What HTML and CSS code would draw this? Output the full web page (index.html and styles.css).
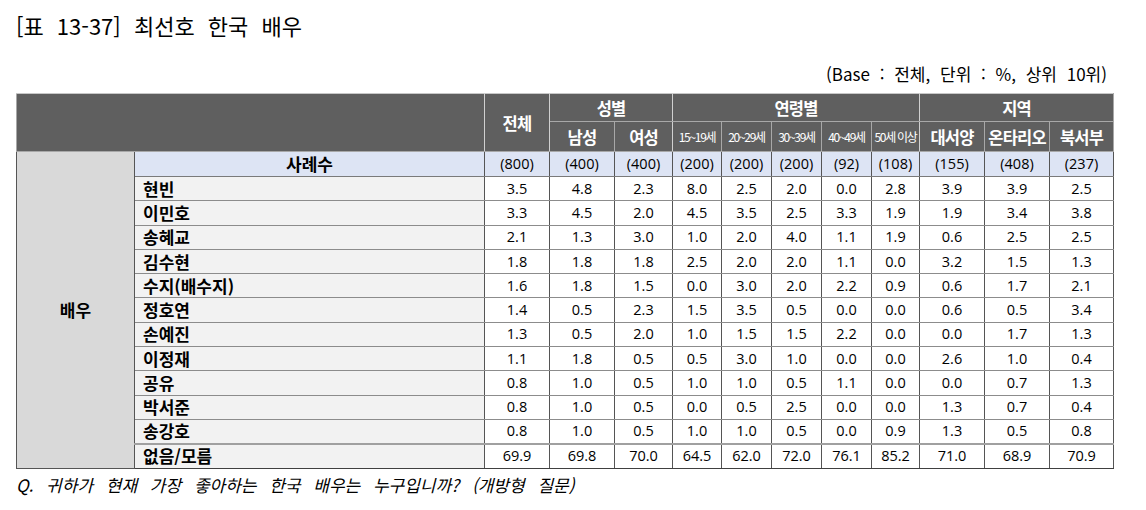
FILE: index.html
```html
<!DOCTYPE html>
<html lang="ko">
<head>
<meta charset="utf-8">
<link rel="stylesheet" href="styles.css">
</head>
<body>
<div class="page">
  <h1 class="title">[표 13-37] 최선호 한국 배우</h1>
  <div class="base">(Base : 전체, 단위 : %, 상위 10위)</div>
  <table class="tbl">
    <colgroup>
      <col class="c-lab"><col class="c-name"><col class="c65"><col class="c65"><col class="c58">
      <col class="c49"><col class="c50"><col class="c50"><col class="c50"><col class="c48">
      <col class="c65"><col class="c65"><col class="c64">
    </colgroup>
    <thead>
      <tr class="h1">
        <th colspan="2" rowspan="2" class="hblank"></th>
        <th rowspan="2" class="gb">전체</th>
        <th colspan="2" class="gb">성별</th>
        <th colspan="5" class="gb">연령별</th>
        <th colspan="3">지역</th>
      </tr>
      <tr class="h2">
        <th>남성</th><th class="gb">여성</th>
        <th class="age">15~19세</th><th class="age">20~29세</th><th class="age">30~39세</th><th class="age">40~49세</th><th class="age gb">50세 이상</th>
        <th>대서양</th><th>온타리오</th><th>북서부</th>
      </tr>
    </thead>
    <tbody>
      <tr class="sample">
        <td rowspan="13" class="lab">배우</td>
        <td class="sname">사례수</td>
        <td>(800)</td><td>(400)</td><td>(400)</td><td>(200)</td><td>(200)</td><td>(200)</td><td>(92)</td><td>(108)</td><td>(155)</td><td>(408)</td><td>(237)</td>
      </tr>
      <tr><td class="name">현빈</td><td>3.5</td><td>4.8</td><td>2.3</td><td>8.0</td><td>2.5</td><td>2.0</td><td>0.0</td><td>2.8</td><td>3.9</td><td>3.9</td><td>2.5</td></tr>
      <tr><td class="name">이민호</td><td>3.3</td><td>4.5</td><td>2.0</td><td>4.5</td><td>3.5</td><td>2.5</td><td>3.3</td><td>1.9</td><td>1.9</td><td>3.4</td><td>3.8</td></tr>
      <tr><td class="name">송혜교</td><td>2.1</td><td>1.3</td><td>3.0</td><td>1.0</td><td>2.0</td><td>4.0</td><td>1.1</td><td>1.9</td><td>0.6</td><td>2.5</td><td>2.5</td></tr>
      <tr><td class="name">김수현</td><td>1.8</td><td>1.8</td><td>1.8</td><td>2.5</td><td>2.0</td><td>2.0</td><td>1.1</td><td>0.0</td><td>3.2</td><td>1.5</td><td>1.3</td></tr>
      <tr><td class="name">수지(배수지)</td><td>1.6</td><td>1.8</td><td>1.5</td><td>0.0</td><td>3.0</td><td>2.0</td><td>2.2</td><td>0.9</td><td>0.6</td><td>1.7</td><td>2.1</td></tr>
      <tr><td class="name">정호연</td><td>1.4</td><td>0.5</td><td>2.3</td><td>1.5</td><td>3.5</td><td>0.5</td><td>0.0</td><td>0.0</td><td>0.6</td><td>0.5</td><td>3.4</td></tr>
      <tr><td class="name">손예진</td><td>1.3</td><td>0.5</td><td>2.0</td><td>1.0</td><td>1.5</td><td>1.5</td><td>2.2</td><td>0.0</td><td>0.0</td><td>1.7</td><td>1.3</td></tr>
      <tr><td class="name">이정재</td><td>1.1</td><td>1.8</td><td>0.5</td><td>0.5</td><td>3.0</td><td>1.0</td><td>0.0</td><td>0.0</td><td>2.6</td><td>1.0</td><td>0.4</td></tr>
      <tr><td class="name">공유</td><td>0.8</td><td>1.0</td><td>0.5</td><td>1.0</td><td>1.0</td><td>0.5</td><td>1.1</td><td>0.0</td><td>0.0</td><td>0.7</td><td>1.3</td></tr>
      <tr><td class="name">박서준</td><td>0.8</td><td>1.0</td><td>0.5</td><td>0.0</td><td>0.5</td><td>2.5</td><td>0.0</td><td>0.0</td><td>1.3</td><td>0.7</td><td>0.4</td></tr>
      <tr class="prelast"><td class="name">송강호</td><td>0.8</td><td>1.0</td><td>0.5</td><td>1.0</td><td>1.0</td><td>0.5</td><td>0.0</td><td>0.9</td><td>1.3</td><td>0.5</td><td>0.8</td></tr>
      <tr class="last"><td class="name">없음/모름</td><td>69.9</td><td>69.8</td><td>70.0</td><td>64.5</td><td>62.0</td><td>72.0</td><td>76.1</td><td>85.2</td><td>71.0</td><td>68.9</td><td>70.9</td></tr>
    </tbody>
  </table>
  <p class="note">Q. 귀하가 현재 가장 좋아하는 한국 배우는 누구입니까? (개방형 질문)</p>
</div>
</body>
</html>
```
FILE: styles.css
```css
* { box-sizing: border-box; }
html, body { margin: 0; padding: 0; background: #fff; }
body {
  font-family: "Open Sans", "Noto Sans CJK KR", sans-serif;
  color: #000;
}
.page { padding: 9px 0 0 16px; width: 1113px; }
.title {
  margin: 0;
  font-family: "Noto Sans CJK KR", sans-serif;
  font-weight: 400;
  font-size: 22px;
  line-height: 32px;
  word-spacing: 7px;
}
.base {
  margin-top: 21px;
  text-align: right;
  font-family: "Noto Sans CJK KR", sans-serif;
  font-size: 17px;
  line-height: 24px;
  word-spacing: 5px;
  padding-right: 6px;
}
.tbl {
  margin-top: 7px;
  width: 1097px;
  table-layout: fixed;
  border-collapse: collapse;
  font-size: 14.5px;
}
.c-lab { width: 118px; }
.c-name { width: 350px; }
.c65 { width: 65px; }
.c64 { width: 64px; }
.c58 { width: 58px; }
.c50 { width: 50px; }
.c49 { width: 49px; }
.c48 { width: 48px; }

.tbl th {
  background: #5f5f5f;
  color: #fff;
  font-family: "Noto Sans CJK KR", sans-serif;
  font-weight: 700;
  font-size: 16.5px;
  border: 1px solid #a8a8a8;
  padding: 0;
  letter-spacing: -0.8px;
}
.tbl th.gb { border-right-color: #d0d0d0; }
.tbl th.hblank { border-right-color: #d0d0d0; }
.h1 th { height: 28px; border-top-color: #c8c8c8; }
.h2 th { height: 30px; }
.tbl th.age {
  font-size: 12px;
  font-weight: 400;
  letter-spacing: -1.3px;
}
.tbl td {
  border: 1px solid #8c8c8c;
  border-left-color: #555;
  border-right-color: #555;
  padding: 0;
  text-align: center;
  height: 24.3px;
  line-height: 20px;
}
.tbl tr.sample td {
  background: #dde4f4;
  height: 25px;
  border-bottom-color: #7a7a7a;
}
.tbl tr.sample td.lab {
  background: #d9d9d9;
  font-family: "Noto Sans CJK KR", sans-serif;
  font-weight: 700;
  font-size: 17px;
  border-bottom-color: #555;
}
.tbl td.sname {
  font-family: "Noto Sans CJK KR", sans-serif;
  font-weight: 700;
  font-size: 17px;
}
.tbl td.name {
  background: #f2f2f2;
  text-align: left;
  padding-left: 8px;
  font-family: "Noto Sans CJK KR", sans-serif;
  font-weight: 700;
  font-size: 17px;
}
.tbl tr.prelast td { border-bottom: 2px solid #a0a0a0; }
.tbl tr.last td { border-bottom: 1px solid #404040; }
.note {
  margin: 5px 0 0 0;
  font-family: "Noto Sans CJK KR", sans-serif;
  font-style: italic;
  font-size: 17px;
  line-height: 22px;
  word-spacing: 8px;
}
```
